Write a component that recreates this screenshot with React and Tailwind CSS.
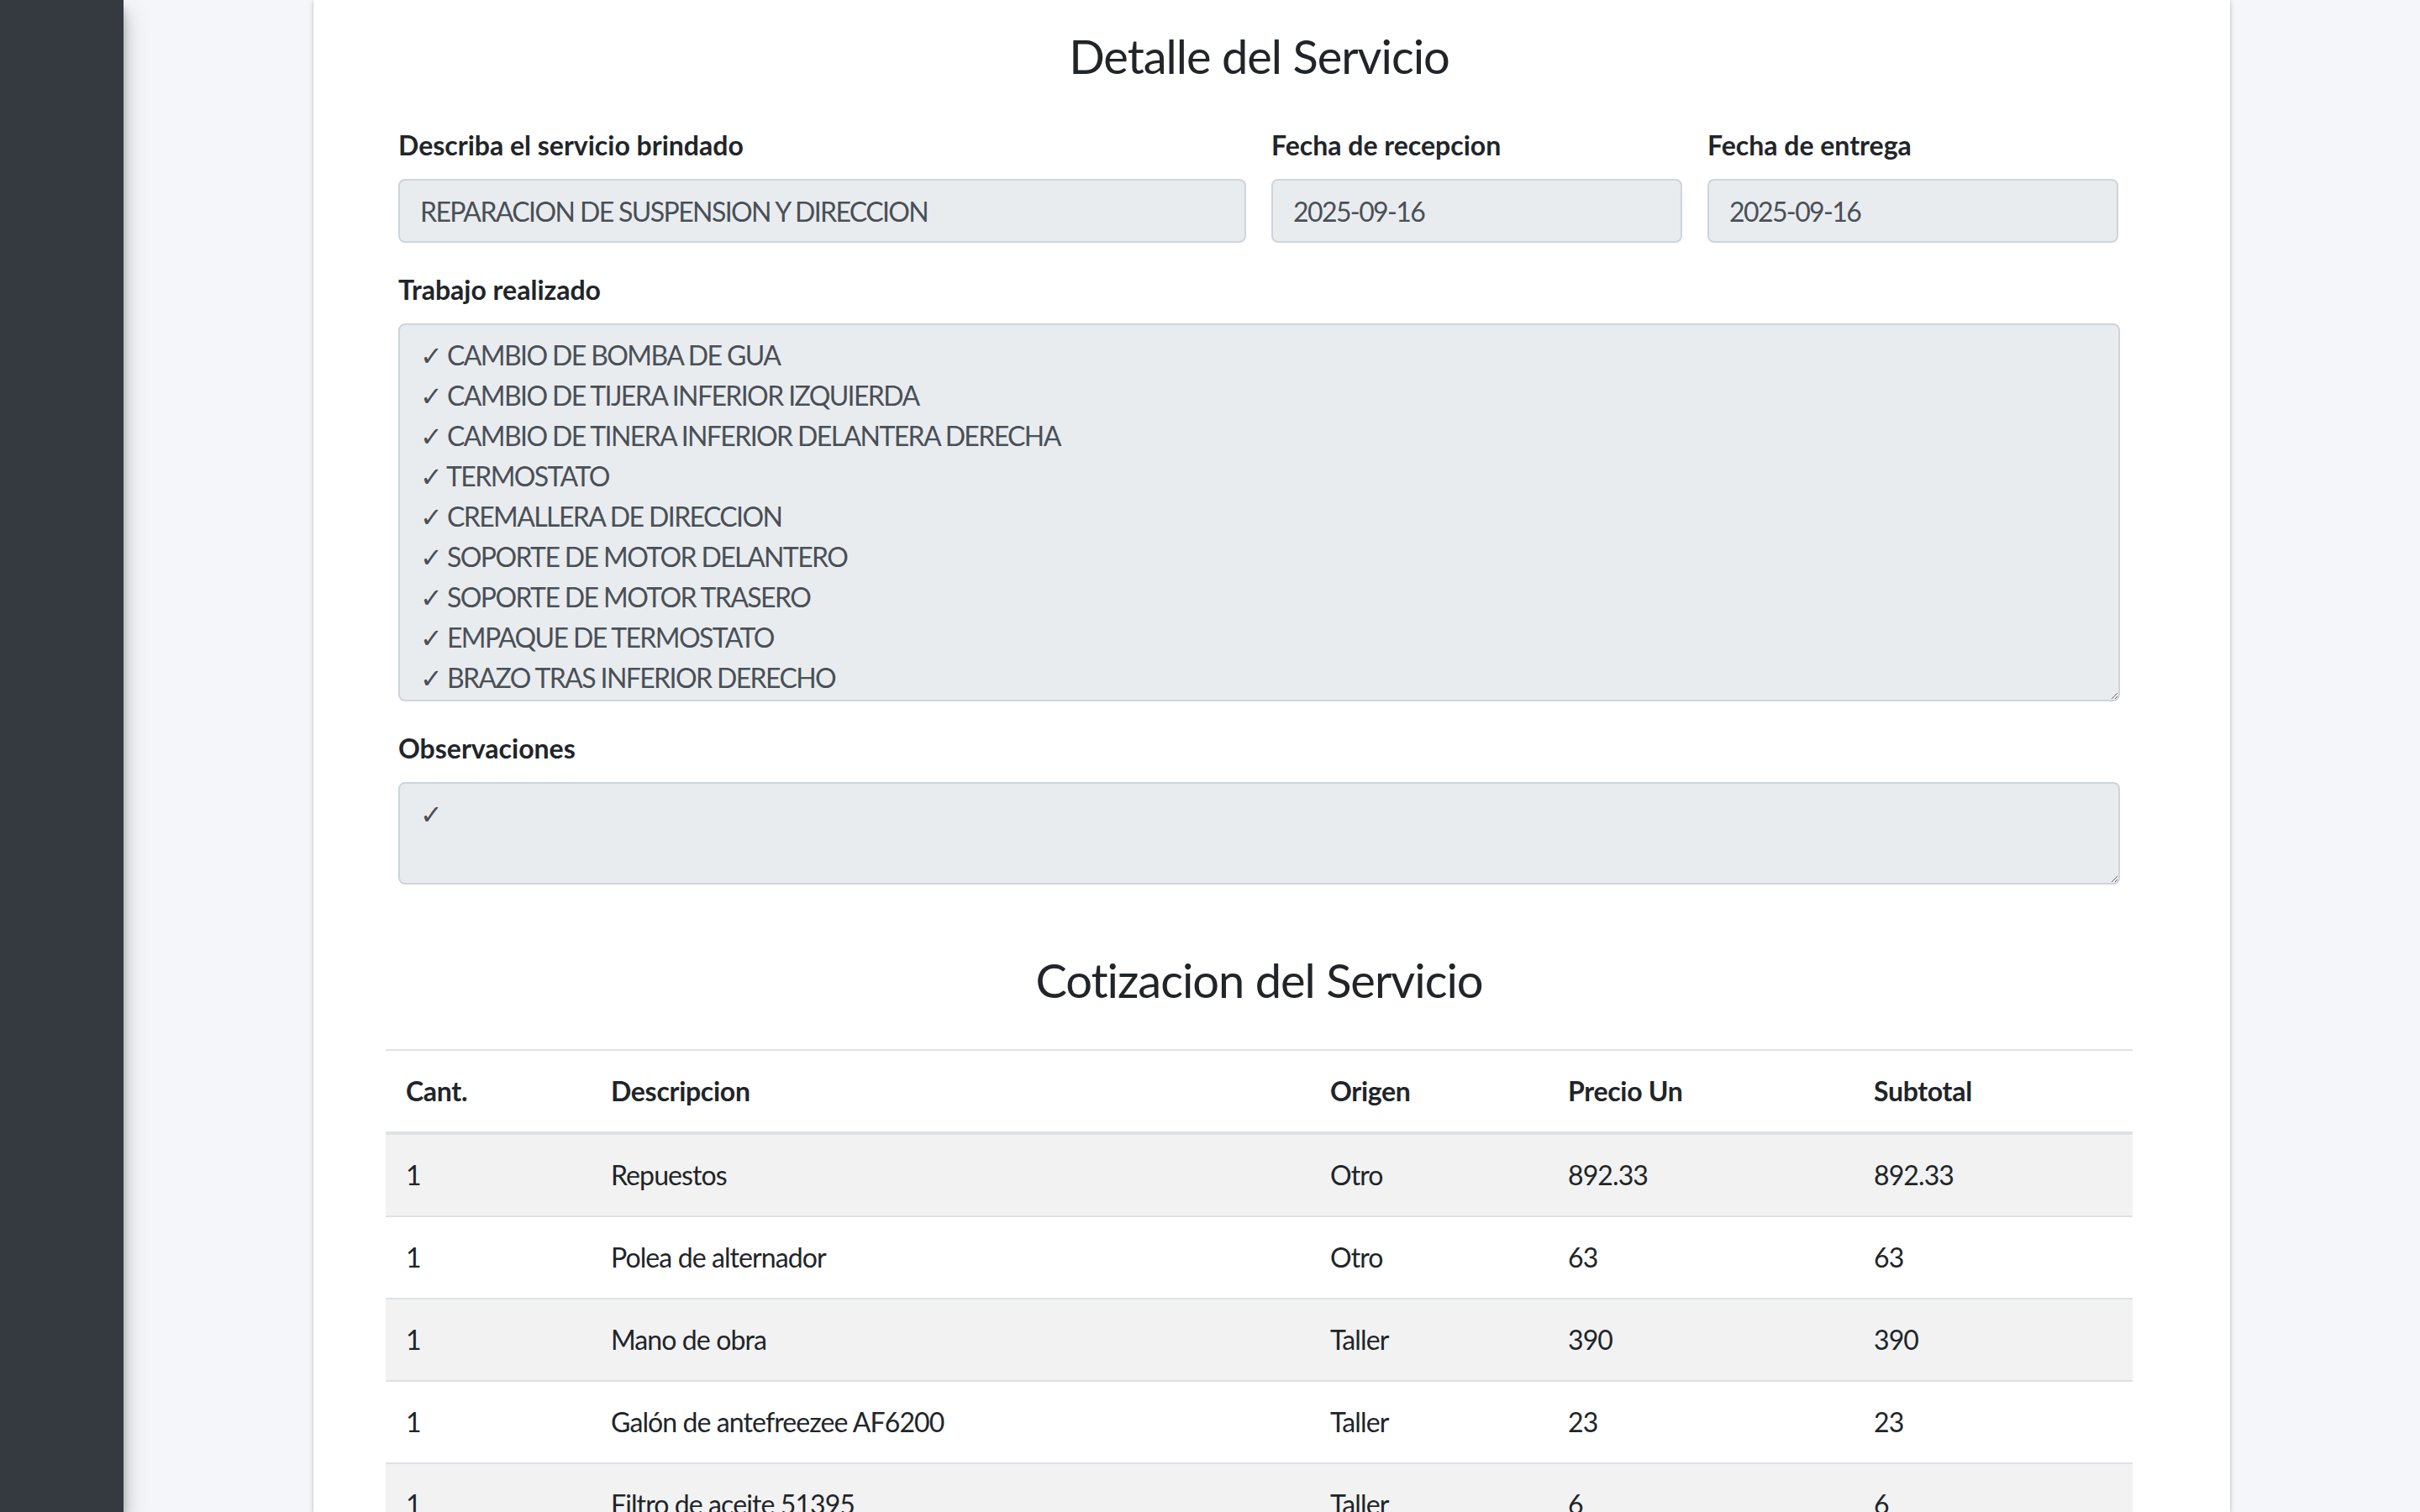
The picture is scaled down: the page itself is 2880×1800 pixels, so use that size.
const trabajos = [
  "CAMBIO DE BOMBA DE GUA",
  "CAMBIO DE TIJERA INFERIOR IZQUIERDA",
  "CAMBIO DE TINERA INFERIOR DELANTERA DERECHA",
  "TERMOSTATO",
  "CREMALLERA DE DIRECCION",
  "SOPORTE DE MOTOR DELANTERO",
  "SOPORTE DE MOTOR TRASERO",
  "EMPAQUE DE TERMOSTATO",
  "BRAZO TRAS INFERIOR DERECHO",
];

const filas = [
  ["1", "Repuestos", "Otro", "892.33", "892.33"],
  ["1", "Polea de alternador", "Otro", "63", "63"],
  ["1", "Mano de obra", "Taller", "390", "390"],
  ["1", "Galón de antefreezee AF6200", "Taller", "23", "23"],
  ["1", "Filtro de aceite 51395", "Taller", "6", "6"],
  ["1", "Aceite de motor", "Taller", "40", "40"],
];

function Label({ children }) {
  return (
    <label className="mb-[16px] block text-[32px] font-bold leading-[48px] text-[#212529]">
      {children}
    </label>
  );
}

function Input({ value }) {
  return (
    <input
      readOnly
      value={value}
      className="block h-[76px] w-full rounded-[8px] border-2 border-[#ced4da] bg-[#e9ecef] px-[24px] text-[32px] leading-[48px] tracking-[-1.6px] text-[#495057] outline-none"
    />
  );
}

export default function App() {
  return (
    <div className="flex h-screen w-full overflow-hidden bg-[#f4f6f9] font-['Lato','Noto_Sans',sans-serif] text-[#212529]">
      <aside className="relative z-10 h-full w-[147px] shrink-0 bg-[#343a40] shadow-[0_14px_28px_rgba(0,0,0,0.25),0_10px_10px_rgba(0,0,0,0.22)]" />
      <main className="flex-1">
        <div className="mx-auto h-full w-[2281px] bg-white pl-[86px] pr-[116px] pt-[33px] shadow-[0_0_2px_rgba(0,0,0,0.125),0_2px_6px_rgba(0,0,0,0.2)]">
          <h3 className="mb-[49px] text-center text-[56px] font-normal leading-[67px] tracking-[-1px]">
            Detalle del Servicio
          </h3>

          <div className="px-[15px]">
            <div className="mb-[32px] grid grid-cols-[1009px_489px_489px] gap-x-[30px]">
              <div>
                <Label>Describa el servicio brindado</Label>
                <Input value="REPARACION DE SUSPENSION Y DIRECCION" />
              </div>
              <div>
                <Label>Fecha de recepcion</Label>
                <Input value="2025-09-16" />
              </div>
              <div>
                <Label>Fecha de entrega</Label>
                <Input value="2025-09-16" />
              </div>
            </div>

            <div className="mb-[32px]">
              <Label>Trabajo realizado</Label>
              <textarea
                readOnly
                value={trabajos.map((t) => "✓ " + t).join("\n")}
                className="block h-[450px] w-full resize-y overflow-hidden rounded-[8px] border-2 border-[#ced4da] bg-[#e9ecef] px-[24px] py-[12px] text-[32px] leading-[48px] tracking-[-1.6px] text-[#495057] outline-none"
              />
            </div>

            <div className="mb-[32px]">
              <Label>Observaciones</Label>
              <textarea
                readOnly
                value="✓"
                className="block h-[122px] w-full resize-y overflow-hidden rounded-[8px] border-2 border-[#ced4da] bg-[#e9ecef] px-[24px] py-[12px] text-[32px] leading-[48px] text-[#495057] outline-none"
              />
            </div>
          </div>

          <h3 className="mb-[49px] mt-[80px] text-center text-[56px] font-normal leading-[67px] tracking-[-1px]">
            Cotizacion del Servicio
          </h3>

          <table className="w-full table-fixed border-collapse text-[32px] leading-[48px]">
            <colgroup>
              <col className="w-[244px]" />
              <col className="w-[856px]" />
              <col className="w-[283px]" />
              <col className="w-[364px]" />
              <col className="w-[332px]" />
            </colgroup>
            <thead>
              <tr>
                {["Cant.", "Descripcion", "Origen", "Precio Un", "Subtotal"].map((h) => (
                  <th
                    key={h}
                    className="border-b-4 border-t-2 border-[#dee2e6] p-[24px] text-left align-bottom font-bold tracking-[-0.3px]"
                  >
                    {h}
                  </th>
                ))}
              </tr>
            </thead>
            <tbody>
              {filas.map((f, i) => (
                <tr key={i} className={i % 2 === 0 ? "bg-[#f2f2f2]" : "bg-white"}>
                  {f.map((c, j) => (
                    <td key={j} className="border-t-2 border-[#dee2e6] p-[24px] align-top tracking-[-0.9px]">
                      {c}
                    </td>
                  ))}
                </tr>
              ))}
            </tbody>
          </table>
        </div>
      </main>
    </div>
  );
}
